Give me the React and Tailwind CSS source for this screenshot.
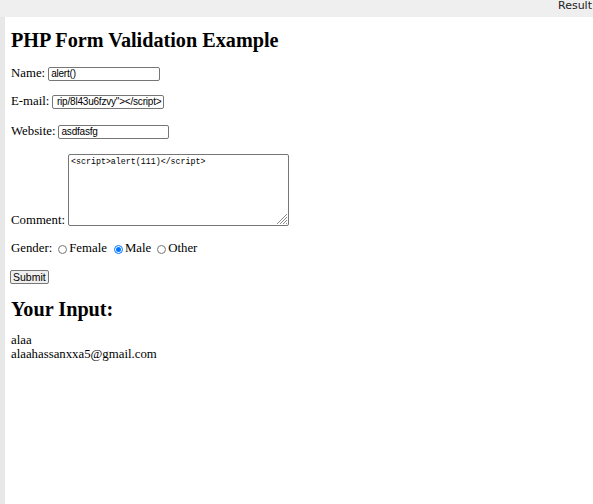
import React from "react";

const serif = { fontFamily: '"Liberation Serif", "Times New Roman", serif' };

function Field({ children, w = "w-[112px]", end = false }) {
  return (
    <div
      className={`${w} h-[14px] border border-[#767676] rounded-[2px] bg-white flex items-center overflow-hidden whitespace-nowrap px-[2px] text-[10px] tracking-[-0.2px] text-black leading-none ${end ? "justify-end" : "justify-start"}`}
      style={{ fontFamily: '"Liberation Sans", Arial, sans-serif' }}
    >
      <span>{children}</span>
    </div>
  );
}

function Radio({ checked }) {
  return (
    <span
      className={`inline-flex items-center justify-center w-[9px] h-[9px] rounded-full border ${checked ? "border-[#0075ff]" : "border-[#767676]"} bg-white`}
    >
      {checked && <span className="block w-[5px] h-[5px] rounded-full bg-[#0075ff]" />}
    </span>
  );
}

export default function App() {
  return (
    <div className="w-[593px] h-[504px] bg-[#efefef] flex flex-col overflow-hidden">
      <div className="h-[17px] flex items-start justify-end">
        <span
          className="text-[11px] leading-[11px] text-[#222] pr-[1px]"
          style={{ fontFamily: '"DejaVu Sans", Verdana, sans-serif' }}
        >
          Result
        </span>
      </div>
      <div className="flex-1 flex">
        <div className="w-[5px] bg-[#e8e8e8]" />
        <div className="flex-1 bg-white pl-[6px] flex flex-col text-black text-[12.8px]" style={serif}>
          <div className="mt-[12px] h-[22px] flex items-center text-[20.2px] font-bold leading-[22px]">
            PHP Form Validation Example
          </div>

          <div className="mt-[16px] h-[14px] flex items-center gap-[3px]">
            <span>Name:</span>
            <Field>alert()</Field>
          </div>

          <div className="mt-[14px] h-[14px] flex items-center gap-[3px]">
            <span>E-mail:</span>
            <Field end>rip/8l43u6fzvy"&gt;&lt;/script&gt;</Field>
          </div>

          <div className="mt-[16px] h-[14px] flex items-center gap-[3px]">
            <span>Website:</span>
            <Field w="w-[111px]">asdfasfg</Field>
          </div>

          <div className="mt-[15px] flex items-end gap-[3px]">
            <span className="leading-[14px] mb-[-1px]">Comment:</span>
            <div className="relative w-[221px] h-[72px] border border-[#767676] rounded-[2px] bg-white px-[2px] pt-[2px]">
              <span
                className="block text-[8.3px] leading-[10px] text-black"
                style={{ fontFamily: '"Liberation Mono", "Courier New", monospace' }}
              >
                &lt;script&gt;alert(111)&lt;/script&gt;
              </span>
              <svg className="absolute right-[1px] bottom-[1px]" width="12" height="12" viewBox="0 0 12 12">
                <g stroke="#8a8a8a" strokeWidth="1">
                  <line x1="2" y1="12" x2="12" y2="2" />
                  <line x1="5" y1="12" x2="12" y2="5" />
                  <line x1="8" y1="12" x2="12" y2="8" />
                  <line x1="11" y1="12" x2="12" y2="11" />
                </g>
              </svg>
            </div>
          </div>

          <div className="mt-[16px] h-[14px] flex items-center">
            <span>Gender:</span>
            <span className="ml-[6px] mr-[2px] flex items-center"><Radio /></span>
            <span>Female</span>
            <span className="ml-[7px] mr-[2px] flex items-center"><Radio checked /></span>
            <span>Male</span>
            <span className="ml-[6px] mr-[2px] flex items-center"><Radio /></span>
            <span>Other</span>
          </div>

          <div className="mt-[14px] h-[14px] flex items-center">
            <div
              className="ml-[-1px] h-[14px] px-[2px] border border-[#767676] rounded-[2px] bg-[#efefef] flex items-center text-[10.5px] leading-none"
              style={{ fontFamily: '"Liberation Sans", Arial, sans-serif' }}
            >
              Submit
            </div>
          </div>

          <div className="mt-[14px] h-[22px] flex items-center text-[20.2px] font-bold leading-[22px]">
            Your Input:
          </div>

          <div className="mt-[13px] leading-[14px]">alaa</div>
          <div className="leading-[14px]">alaahassanxxa5@gmail.com</div>
        </div>
      </div>
    </div>
  );
}
